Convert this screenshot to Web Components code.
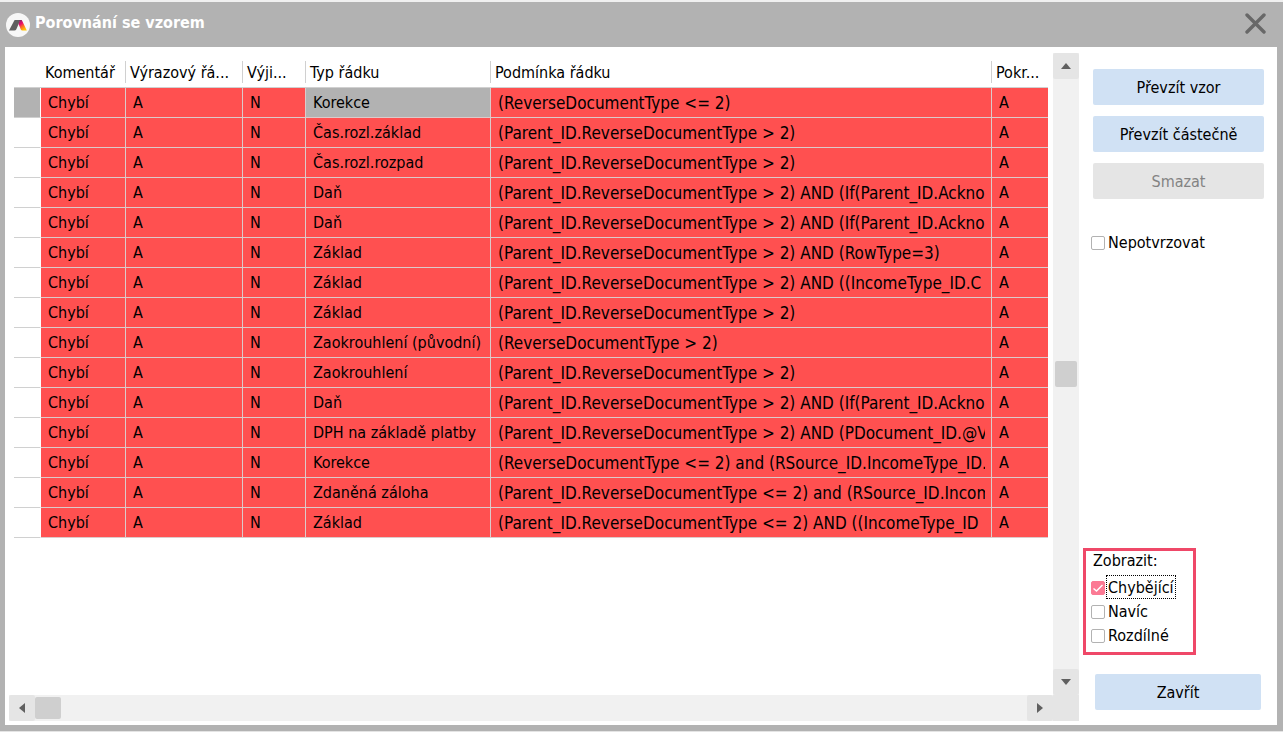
<!DOCTYPE html>
<html lang="cs">
<head>
<meta charset="utf-8">
<title>Porovnání se vzorem</title>
<style>
  html, body { margin: 0; height: 100%; }
  body { background: #f0f0f0; color: #000; font: 16px/20px "DejaVu Sans Condensed", "Noto Sans", sans-serif; }
</style>
</head>
<body>
<app-dialog>
  <span slot="title">Porovnání se vzorem</span>
  <compare-grid></compare-grid>
  <side-panel>
    <action-button>Převzít vzor</action-button>
    <action-button>Převzít částečně</action-button>
    <action-button disabled>Smazat</action-button>
    <check-option slot="option">Nepotvrzovat</check-option>
    <check-group slot="filter" label="Zobrazit:">
      <check-option checked focused>Chybějící</check-option>
      <check-option>Navíc</check-option>
      <check-option>Rozdílné</check-option>
    </check-group>
    <action-button slot="footer">Zavřít</action-button>
  </side-panel>
</app-dialog>

<script>
  class BaseElement extends HTMLElement {
    constructor() {
      super();
      this.attachShadow({ mode: 'open' });
    }
    connectedCallback() { this.shadowRoot.innerHTML = this.render(); }
  }

  customElements.define('app-dialog', class extends BaseElement {
    render() {
      return `
      <style>
        :host { display: flex; flex-direction: column; box-sizing: border-box; min-height: 100vh; border-top: 2px solid #f0f0f0; border-bottom: 1px solid #e4e4e4; background: #b2b2b2; }
        header { display: flex; align-items: center; gap: 5px; height: 45px; padding: 0 16px 0 6px; box-sizing: border-box; }
        .logo { width: 24px; height: 24px; flex: none; }
        h1 { flex: 1; margin: 0; padding-bottom: 3px; font-size: 16px; line-height: 20px; font-weight: 700; color: #fff; }
        button { width: 24px; height: 24px; padding: 0; border: 0; background: none; }
        button svg { display: block; }
        main { flex: 1; display: flex; margin: 0 6px 6px 5px; background: #fff; }
      </style>
      <header>
        <svg class="logo" viewBox="0 0 24 24" aria-hidden="true">
          <defs>
            <linearGradient id="flame" x1="0" y1="0" x2=".55" y2="1">
              <stop offset="0" stop-color="#6a2e62"/><stop offset=".4" stop-color="#ec0a6c"/>
              <stop offset=".65" stop-color="#f9692a"/><stop offset="1" stop-color="#ffc400"/>
            </linearGradient>
          </defs>
          <circle cx="12" cy="12" r="12" fill="#f7f7f7"/>
          <path d="M8.6 7H14.4L10.2 16.5Q9.7 17.6 8.4 17.6H3Z" fill="#606060"/>
          <path d="M13.6 7H15.8L20.8 17.6H16.4Q15.2 17.6 14.8 16.5L12.6 11Z" fill="url(#flame)"/>
        </svg>
        <h1><slot name="title"></slot></h1>
        <button type="button" aria-label="Zavřít okno">
          <svg width="24" height="24" viewBox="0 0 24 24"><path d="M4 2 21 19M21 2 4 19" stroke="#686868" stroke-width="3.4" stroke-linecap="round"/></svg>
        </button>
      </header>
      <main><slot></slot></main>`;
    }
  });

  customElements.define('scroll-bar', class extends BaseElement {
    render() {
      return `
      <style>
        :host { display: flex; background: #f1f1f1; }
        :host([vertical]) { flex-direction: column; }
        button { width: 26px; height: 26px; flex: none; display: grid; place-items: center; padding: 0; border: 0; border-radius: 2px; background: #e5e5e5; }
        .before { flex: var(--before, 0) 0 0; }
        .after { flex: var(--after, 1) 0 0; }
        .thumb { width: 26px; height: 22px; margin: 2px 0; border-radius: 2px; background: #cfcfcf; }
        :host([vertical]) .thumb { width: 22px; height: 26px; margin: 0 2px; }
        svg { transform: rotate(-90deg); }
        button:last-child svg { transform: rotate(90deg); }
        :host([vertical]) svg { transform: none; }
        :host([vertical]) button:last-child svg { transform: rotate(180deg); }
      </style>
      <button type="button" aria-label="Zpět"><svg width="10" height="6" viewBox="0 0 10 6"><path d="M0 6 5 0 10 6Z" fill="#606060"/></svg></button>
      <div class="before"></div><div class="thumb"></div><div class="after"></div>
      <button type="button" aria-label="Vpřed"><svg width="10" height="6" viewBox="0 0 10 6"><path d="M0 6 5 0 10 6Z" fill="#606060"/></svg></button>`;
    }
  });

  const COLUMNS = ['Komentář', 'Výrazový řá...', 'Výji...', 'Typ řádku', 'Podmínka řádku', 'Pokr...'];
  const ROWS = [
    ['Korekce', '(ReverseDocumentType <= 2)'],
    ['Čas.rozl.základ', '(Parent_ID.ReverseDocumentType > 2)'],
    ['Čas.rozl.rozpad', '(Parent_ID.ReverseDocumentType > 2)'],
    ['Daň', '(Parent_ID.ReverseDocumentType > 2) AND (If(Parent_ID.Ackno'],
    ['Daň', '(Parent_ID.ReverseDocumentType > 2) AND (If(Parent_ID.Ackno'],
    ['Základ', '(Parent_ID.ReverseDocumentType > 2) AND (RowType=3)'],
    ['Základ', '(Parent_ID.ReverseDocumentType > 2) AND ((IncomeType_ID.C'],
    ['Základ', '(Parent_ID.ReverseDocumentType > 2)'],
    ['Zaokrouhlení (původní)', '(ReverseDocumentType > 2)'],
    ['Zaokrouhlení', '(Parent_ID.ReverseDocumentType > 2)'],
    ['Daň', '(Parent_ID.ReverseDocumentType > 2) AND (If(Parent_ID.Ackno'],
    ['DPH na základě platby', '(Parent_ID.ReverseDocumentType > 2) AND (PDocument_ID.@V'],
    ['Korekce', '(ReverseDocumentType <= 2) and (RSource_ID.IncomeType_ID.'],
    ['Zdaněná záloha', '(Parent_ID.ReverseDocumentType <= 2) and (RSource_ID.Incom'],
    ['Základ', '(Parent_ID.ReverseDocumentType <= 2) AND ((IncomeType_ID'],
  ];
  const escape = text => text.replace(/</g, '&lt;').replace(/>/g, '&gt;');

  customElements.define('compare-grid', class extends BaseElement {
    render() {
      const head = COLUMNS.map(name => `<th scope="col"><div>${name}</div></th>`).join('');
      const body = ROWS.map(([type, condition], i) => {
        const cells = ['Chybí', 'A', 'N', type, condition, 'A']
          .map((text, c) => `<td${i === 0 && c === 3 ? ' class="current"' : c === 4 ? ' class="condition"' : ''}><div>${escape(text)}</div></td>`).join('');
        return `<tr><td class="mark${i === 0 ? ' current' : ''}"></td>${cells}</tr>`;
      }).join('');
      return `
      <style>
        :host { flex: 1; min-width: 0; display: grid; grid-template-columns: minmax(0, 1fr) 26px; grid-template-rows: 1fr 26px; padding: 6px 0 4px 4px; }
        .view { padding: 4px 5px 0 5px; }
        table { width: 100%; table-layout: fixed; border-collapse: separate; border-spacing: 0; }
        th { height: 30px; padding: 0; border-bottom: 1px solid #d0d0d0; font-weight: 400; text-align: left; }
        th div { height: 22px; line-height: 24px; padding-left: 4px; border-right: 1px solid #d0d0d0; white-space: nowrap; overflow: hidden; }
        th:last-child div { border: 0; }
        td { height: 28px; padding: 1px 6px 0 7px; background: #ff5050; border: solid #dccaca; border-width: 0 1px 1px 0; white-space: nowrap; }
        td:last-child { border-right: 0; }
        td div { overflow: hidden; line-height: 22px; }
        td.condition { font-size: 17px; }
        td.mark { background: #fff; border-color: #d0d0d0; border-right-color: #fff; }
        td.current, td.mark.current { background: #b2b2b2; }
        .c0 { width: 27px } .c1 { width: 85px } .c2 { width: 117px } .c3 { width: 63px } .c4 { width: 185px } .c6 { width: 56px }
        .down { --before: 282; --after: 282; }
        .corner { background: #e5e5e5; }
      </style>
      <div class="view">
        <table>
          <colgroup><col class="c0"><col class="c1"><col class="c2"><col class="c3"><col class="c4"><col><col class="c6"></colgroup>
          <thead><tr><th></th>${head}</tr></thead>
          <tbody>${body}</tbody>
        </table>
      </div>
      <scroll-bar class="down" vertical></scroll-bar>
      <scroll-bar></scroll-bar>
      <div class="corner"></div>`;
    }
  });

  customElements.define('side-panel', class extends BaseElement {
    render() {
      return `
      <style>
        :host { flex: none; display: flex; flex-direction: column; align-items: flex-start; width: 198px; box-sizing: border-box; padding: 22px 13px 15px 4px; }
        .actions { align-self: stretch; display: flex; flex-direction: column; gap: 11px; padding-left: 10px; }
        .option { margin-top: 31px; padding-left: 8px; }
        .filter { margin-top: auto; }
        .footer { align-self: stretch; margin-top: 19px; padding: 0 3px 0 12px; }
      </style>
      <div class="actions"><slot></slot></div>
      <div class="option"><slot name="option"></slot></div>
      <div class="filter"><slot name="filter"></slot></div>
      <div class="footer"><slot name="footer"></slot></div>`;
    }
  });

  customElements.define('action-button', class extends BaseElement {
    render() {
      return `
      <style>
        :host { display: block; }
        button { display: block; width: 100%; height: 36px; padding: 2px 0 0; border: 0; border-radius: 2px; background: #d0e1f4; color: #000; font: inherit; }
        button:disabled { background: #e5e5e5; color: #838383; }
      </style>
      <button type="button"${this.hasAttribute('disabled') ? ' disabled' : ''}><slot></slot></button>`;
    }
  });

  customElements.define('check-option', class extends BaseElement {
    render() {
      return `
      <style>
        :host { display: block; }
        label { display: flex; align-items: center; height: 24px; gap: 1px; }
        input { appearance: none; width: 14px; height: 14px; margin: 2px 0 0; border: 1px solid #b2b2b2; border-radius: 2px; background: #fff; }
        input:checked { border-color: #fb7a94; background: #fb7a94; }
        .box { display: grid; }
        .box > * { grid-area: 1 / 1; }
        .box svg { margin-top: 2px; pointer-events: none; visibility: hidden; z-index: 1; }
        input:checked + svg { visibility: visible; }
        .text { padding: 2px 1px 0; line-height: 20px; border: 1px solid transparent; }
        :host([focused]) .text { border: 1px dotted #000; }
      </style>
      <label><span class="box"><input type="checkbox"${this.hasAttribute('checked') ? ' checked' : ''}>
        <svg width="14" height="14" viewBox="0 0 14 14"><path d="M2.5 7.5 5.5 10 11.5 4" fill="none" stroke="#fff" stroke-width="1.5"/></svg></span>
        <span class="text"><slot></slot></span></label>`;
    }
  });

  customElements.define('check-group', class extends BaseElement {
    render() {
      return `
      <style>
        :host { display: block; box-sizing: border-box; width: 113px; border: 3px solid #ef4868; padding: 0 0 5px 5px; }
        .label { margin-bottom: 4px; padding-left: 2px; line-height: 20px; }
      </style>
      <div role="group" aria-labelledby="name">
        <div class="label" id="name">${this.getAttribute('label')}</div>
        <slot></slot>
      </div>`;
    }
  });
</script>
</body>
</html>
